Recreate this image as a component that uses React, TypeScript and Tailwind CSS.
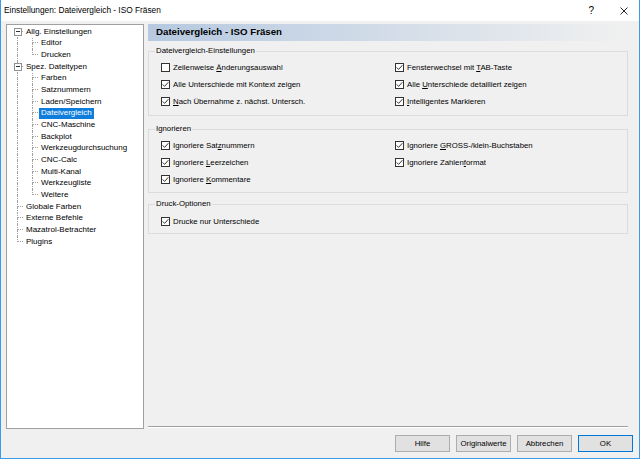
import React from "react";

type Conn = "first" | "tee" | "last" | "pipe";

type TreeRow = {
  label: string;
  cols: Conn[];
  expander?: boolean;
  selected?: boolean;
};

const treeRows: TreeRow[] = [
  { label: "Allg. Einstellungen", cols: ["first"], expander: true },
  { label: "Editor", cols: ["pipe", "tee"] },
  { label: "Drucken", cols: ["pipe", "last"] },
  { label: "Spez. Dateitypen", cols: ["tee"], expander: true },
  { label: "Farben", cols: ["pipe", "tee"] },
  { label: "Satznummern", cols: ["pipe", "tee"] },
  { label: "Laden/Speichern", cols: ["pipe", "tee"] },
  { label: "Dateivergleich", cols: ["pipe", "tee"], selected: true },
  { label: "CNC-Maschine", cols: ["pipe", "tee"] },
  { label: "Backplot", cols: ["pipe", "tee"] },
  { label: "Werkzeugdurchsuchung", cols: ["pipe", "tee"] },
  { label: "CNC-Calc", cols: ["pipe", "tee"] },
  { label: "Multi-Kanal", cols: ["pipe", "tee"] },
  { label: "Werkzeugliste", cols: ["pipe", "tee"] },
  { label: "Weitere", cols: ["pipe", "last"] },
  { label: "Globale Farben", cols: ["tee"] },
  { label: "Externe Befehle", cols: ["tee"] },
  { label: "Mazatrol-Betrachter", cols: ["tee"] },
  { label: "Plugins", cols: ["last"] },
];

const ConnCell = ({ conn, expander }: { conn: Conn; expander?: boolean }) => {
  const up = conn !== "first";
  const down = conn !== "last";
  const across = conn !== "pipe";
  return (
    <div className="relative grid h-full w-[15px] shrink-0 grid-cols-[10px_5px] grid-rows-2">
      <div className={up ? "border-r border-dotted border-[#a0a0a0]" : ""} />
      <div className={across ? "border-b border-dotted border-[#a0a0a0]" : ""} />
      <div className={down ? "border-r border-dotted border-[#a0a0a0]" : ""} />
      <div />
      {expander && (
        <div className="absolute left-[5.5px] top-1/2 flex h-[8px] w-[8px] -translate-y-1/2 items-center justify-center border border-[#919191] bg-white">
          <div className="h-px w-[4px] bg-[#333]" />
        </div>
      )}
    </div>
  );
};

const Check = ({ label }: { label: React.ReactNode }) => (
  <div className="flex h-[17px] items-center gap-[3px]">
    <span className="flex h-[9px] w-[9px] shrink-0 items-center justify-center border border-[#333] bg-white">
      <svg width="7" height="7" viewBox="0 0 7 7">
        <path d="M0.6 3.4 L2.6 5.4 L6.4 1.2" stroke="#222" strokeWidth="0.9" fill="none" />
      </svg>
    </span>
    <span>{label}</span>
  </div>
);

const Unchecked = ({ label }: { label: React.ReactNode }) => (
  <div className="flex h-[17px] items-center gap-[3px]">
    <span className="h-[9px] w-[9px] shrink-0 border border-[#333] bg-white" />
    <span>{label}</span>
  </div>
);

const Group = ({ title, className, children }: { title: string; className: string; children: React.ReactNode }) => (
  <fieldset className={"border border-[#dcdcdc] px-0 " + className}>
    <legend className="ml-[6px] px-[1px] leading-[10px]">{title}</legend>
    {children}
  </fieldset>
);

const Button = ({ label, primary }: { label: string; primary?: boolean }) => (
  <button
    className={
      primary
        ? "h-[17px] w-[55px] border border-[#0078d7] bg-[#e1e1e1] leading-none text-black"
        : "h-[17px] w-[55px] border border-[#adadad] bg-[#e1e1e1] leading-none text-black"
    }
  >
    {label}
  </button>
);

export default function App() {
  return (
    <div className="flex h-[459px] w-[640px] flex-col border-x border-b border-[#3d9ae6] bg-[#f0f0f0] font-['Liberation_Sans',Arial,sans-serif] text-[7.8px] text-black">
      {/* title bar */}
      <div className="flex h-[21px] shrink-0 items-center bg-white pl-[3px] pr-[11px]">
        <span className="text-[8.3px]">Einstellungen: Dateivergleich - ISO Fräsen</span>
        <span className="ml-auto text-[10px] leading-none">?</span>
        <svg className="ml-[26px]" width="8" height="8" viewBox="0 0 8 8">
          <path d="M0.5 0.5 L7.5 7.5 M7.5 0.5 L0.5 7.5" stroke="#111" strokeWidth="0.9" />
        </svg>
      </div>

      <div className="mt-[3px] flex h-[405px] shrink-0">
        {/* tree */}
        <div className="ml-[5px] h-full w-[138px] shrink-0 border border-[#a0a0a0] bg-white pt-[1px] text-[8px]">
          {treeRows.map((row) => (
            <div key={row.label} className="flex h-[11.67px] items-center pl-[1px]">
              {row.cols.map((c, i) => (
                <ConnCell key={i} conn={c} expander={row.expander && i === row.cols.length - 1} />
              ))}
              <span
                className={
                  row.selected
                    ? "ml-[1px] flex h-full items-center bg-[#0f7ddb] px-[2px] whitespace-nowrap text-white"
                    : "ml-[1px] flex h-full items-center px-[2px] whitespace-nowrap"
                }
              >
                {row.label}
              </span>
            </div>
          ))}
        </div>

        {/* content */}
        <div className="ml-[4px] mr-[11px] flex flex-1 flex-col">
          <div className="flex h-[17px] items-center bg-linear-to-r from-[#b6c9e0] to-[#f0f0f0] pl-[8px] text-[9.7px] font-bold">
            Dateivergleich - ISO Fräsen
          </div>

          <Group title="Dateivergleich-Einstellungen" className="mt-[5px] pb-[5px] pt-[3px]">
            <div className="grid grid-cols-[234px_1fr] pl-[12px]">
              <Unchecked label={<>Zeilenweise <u>Ä</u>nderungsauswahl</>} />
              <Check label={<>Fensterwechsel mit <u>T</u>AB-Taste</>} />
              <Check label="Alle Unterschiede mit Kontext zeigen" />
              <Check label={<>Alle <u>U</u>nterschiede detailliert zeigen</>} />
              <Check label={<><u>N</u>ach Übernahme z. nächst. Untersch.</>} />
              <Check label={<><u>I</u>ntelligentes Markieren</>} />
            </div>
          </Group>

          <Group title="Ignorieren" className="mt-[8px] pb-[4px] pt-[3px]">
            <div className="grid grid-cols-[234px_1fr] pl-[12px]">
              <Check label={<>Ignoriere Sat<u>z</u>nummern</>} />
              <Check label={<>Ignoriere <u>G</u>ROSS-/klein-Buchstaben</>} />
              <Check label={<>Ignoriere <u>L</u>eerzeichen</>} />
              <Check label={<>Ignoriere Zahlen<u>f</u>ormat</>} />
              <Check label={<>Ignoriere <u>K</u>ommentare</>} />
            </div>
          </Group>

          <Group title="Druck-Optionen" className="mt-[6px] pb-[3px] pt-[4px]">
            <div className="pl-[12px]">
              <Check label="Drucke nur Unterschiede" />
            </div>
          </Group>

          <div className="mb-[1px] mt-auto border-b border-t border-b-white border-t-[#a0a0a0]" />
        </div>
      </div>

      <div className="mt-[6px] flex justify-end gap-[6px] pr-[6px]">
        <Button label="Hilfe" />
        <Button label="Originalwerte" />
        <Button label="Abbrechen" />
        <Button label="OK" primary />
      </div>
    </div>
  );
}
